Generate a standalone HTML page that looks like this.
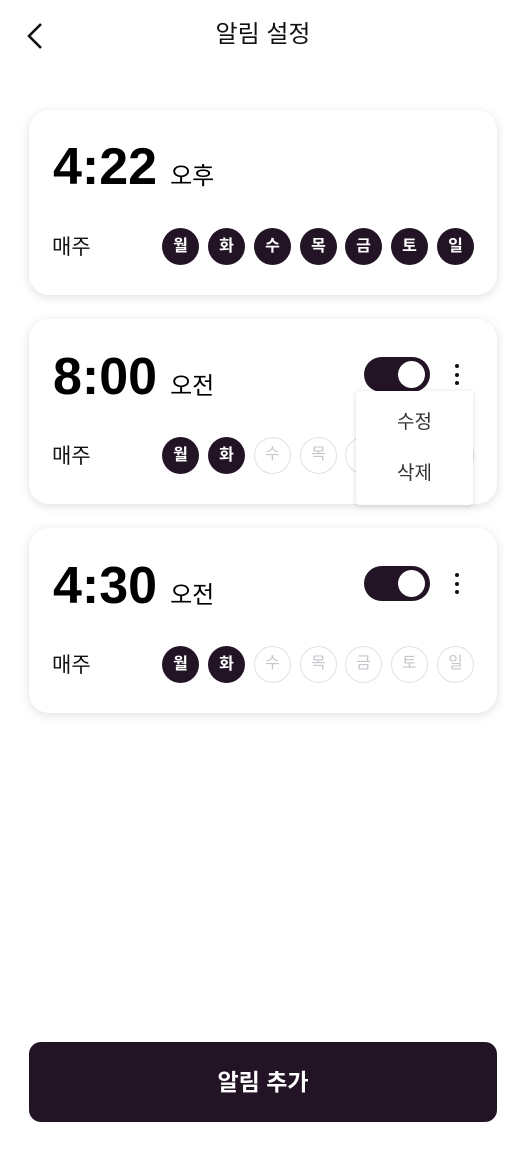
<!DOCTYPE html>
<html><head><meta charset="utf-8"><style>
*{margin:0;padding:0;box-sizing:border-box}
body{width:526px;height:1154px;background:#fff;position:relative;overflow:hidden;font-family:"Liberation Sans","Noto Sans CJK KR",sans-serif;color:#111}
.abs{position:absolute}
.card{position:absolute;left:29px;width:468px;height:185px;background:#fff;border-radius:20px;box-shadow:0 2px 10px rgba(0,0,0,0.13)}
.time{position:absolute;left:24px;top:22px;font-size:52px;font-weight:bold;line-height:70px;color:#000;white-space:nowrap}
.ampm{font-size:24px;font-weight:normal;margin-left:13px}
.mj{position:absolute;left:23px;top:123px;font-size:21px;line-height:30px}
.d{position:absolute;top:118px;width:37px;height:37px;border-radius:50%;background:#221325;color:#fff;font-size:16px;font-weight:bold;text-align:center;line-height:37px}
.d.off{background:#fff;border:1.5px solid #e2e0e6;color:#c8c6cc;font-weight:normal;line-height:34px}
.tg{position:absolute;left:335px;top:38px;width:66px;height:35px;border-radius:18px;background:#221325}
.tg::after{content:"";position:absolute;right:5px;top:4px;width:27px;height:27px;border-radius:50%;background:#fff}
.dots{position:absolute;left:426px;top:45px;width:4px}
.dots i{display:block;width:4px;height:4px;border-radius:50%;background:#111;margin-bottom:4.5px}
</style></head><body>
<svg class="abs" style="left:24px;top:22px" width="20" height="28" viewBox="0 0 20 28"><path d="M17 2 L5 14 L17 26" fill="none" stroke="#111" stroke-width="2.6"/></svg>
<div class="abs" style="left:0;width:526px;top:18px;text-align:center;font-size:24px;line-height:34px;">알림 설정</div>

<div class="card" style="top:110px">
<div class="time">4:22<span class="ampm">오후</span></div>
<div class="mj">매주</div>
<div class="d" style="left:133px">월</div><div class="d" style="left:179px">화</div><div class="d" style="left:225px">수</div><div class="d" style="left:271px">목</div><div class="d" style="left:316px">금</div><div class="d" style="left:362px">토</div><div class="d" style="left:408px">일</div>
</div>

<div class="card" style="top:319px">
<div class="time" style="top:23px">8:00<span class="ampm">오전</span></div>
<div class="tg"></div><div class="dots"><i></i><i></i><i></i></div>
<div class="mj">매주</div>
<div class="d" style="left:133px">월</div><div class="d" style="left:179px">화</div><div class="d off" style="left:225px">수</div><div class="d off" style="left:271px">목</div><div class="d off" style="left:316px">금</div><div class="d off" style="left:362px">토</div><div class="d off" style="left:408px">일</div>
</div>

<div class="card" style="top:528px">
<div class="time" style="top:23px">4:30<span class="ampm">오전</span></div>
<div class="tg"></div><div class="dots"><i></i><i></i><i></i></div>
<div class="mj">매주</div>
<div class="d" style="left:133px">월</div><div class="d" style="left:179px">화</div><div class="d off" style="left:225px">수</div><div class="d off" style="left:271px">목</div><div class="d off" style="left:316px">금</div><div class="d off" style="left:362px">토</div><div class="d off" style="left:408px">일</div>
</div>

<div class="abs" style="left:356px;top:391px;width:117px;height:114px;background:#fff;border-radius:4px;box-shadow:0 1px 6px rgba(0,0,0,0.15);font-size:19px;color:#333;text-align:center">
<div style="position:absolute;left:0;right:0;top:19px;line-height:26px">수정</div>
<div style="position:absolute;left:0;right:0;top:70px;line-height:26px">삭제</div>
</div>

<div class="abs" style="left:29px;top:1042px;width:468px;height:80px;border-radius:12px;background:#221325;color:#fff;font-size:23px;font-weight:bold;text-align:center;line-height:80px">알림 추가</div>
</body></html>
